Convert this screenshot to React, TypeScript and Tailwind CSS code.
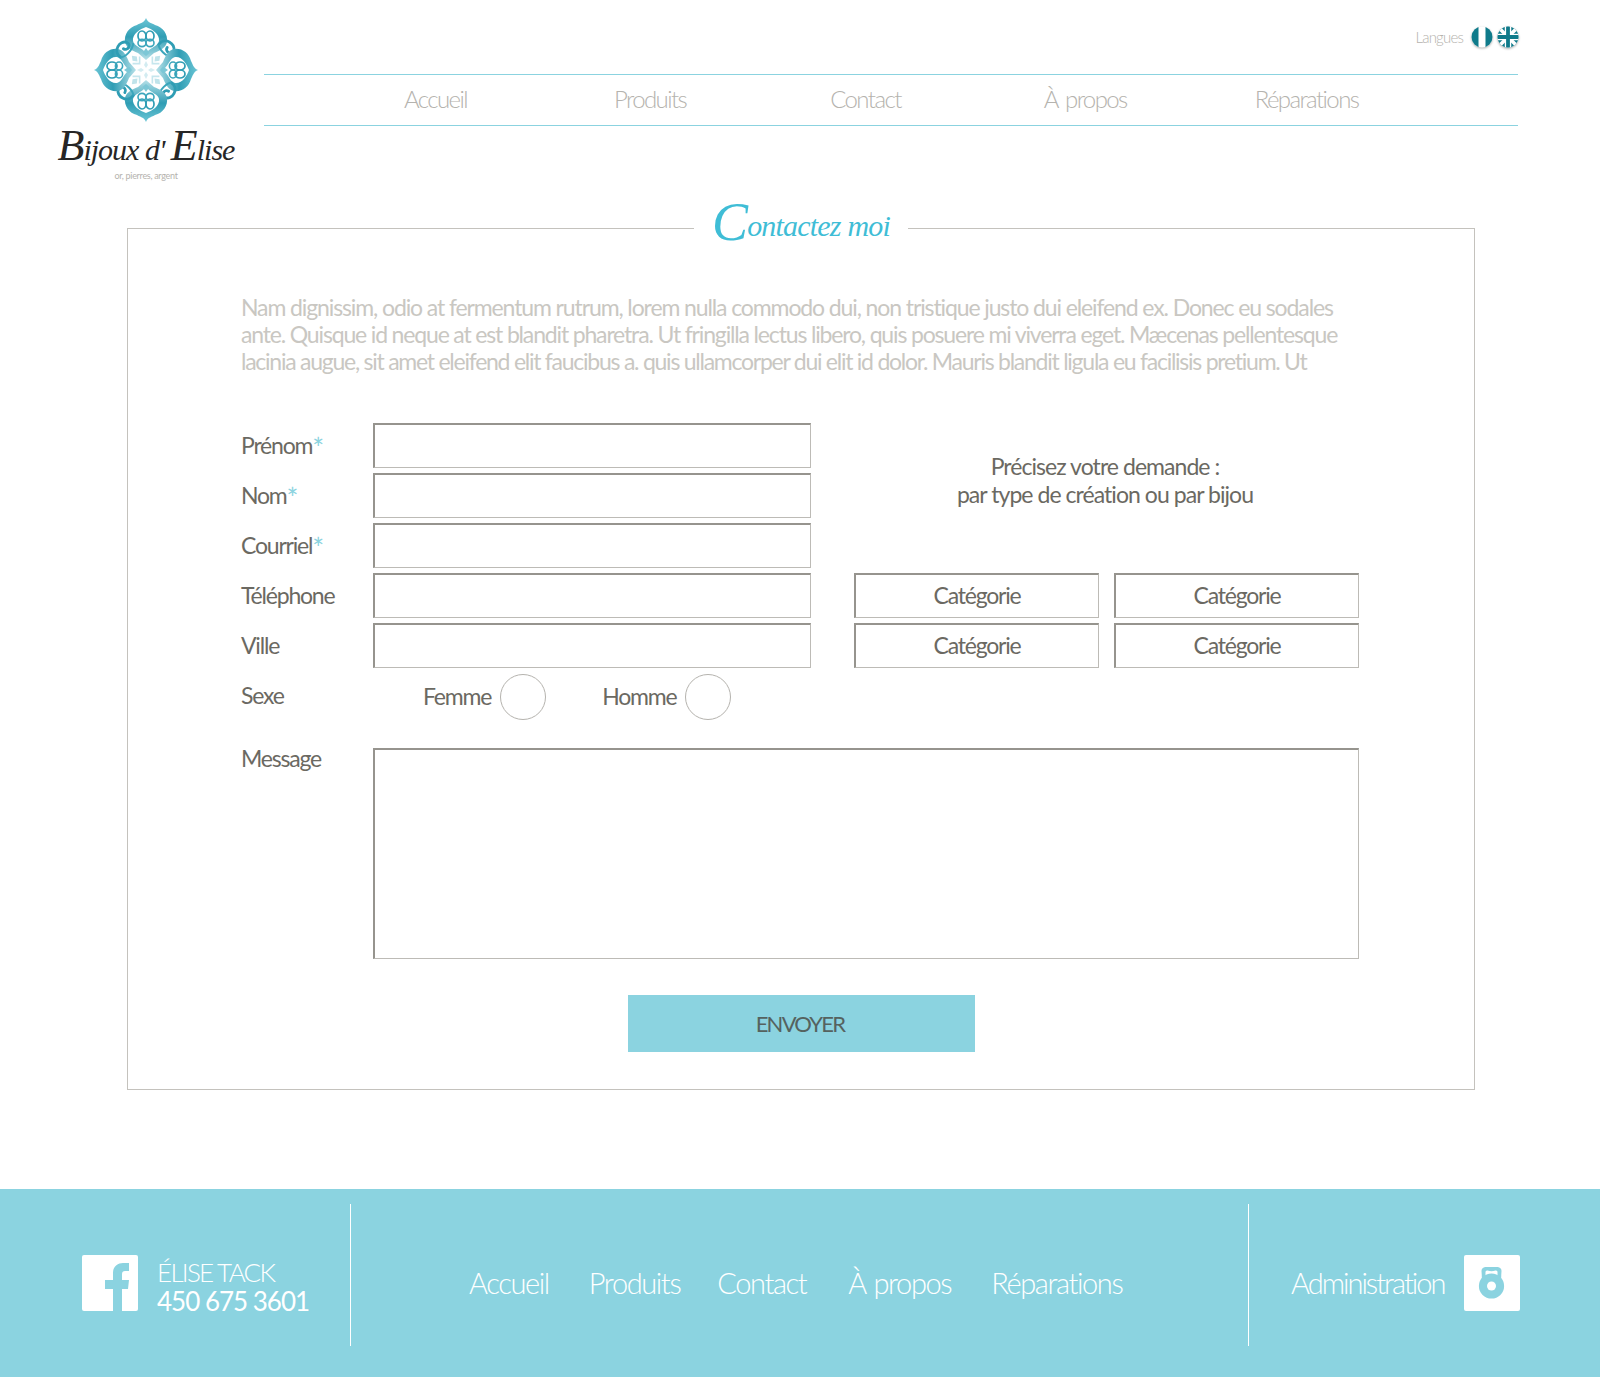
import React from "react";

const sans = "font-['Lato','Open_Sans',sans-serif]";

function Motif() {
  return (
    <g>
      <path d="M0 -52 C2 -47 6 -47 9 -45 C17 -43 22 -36 21 -28 C20 -22 13 -19 8 -17 L0 -10 L-8 -17 C-13 -19 -20 -22 -21 -28 C-22 -36 -17 -43 -9 -45 C-6 -47 -2 -47 0 -52 Z" fill="url(#lg)" />
      <path d="M0 -43 C6 -41 14 -36 13 -29 C12 -24 5 -23 0 -17 C-5 -23 -12 -24 -13 -29 C-14 -36 -6 -41 0 -43 Z" fill="#fff" />
      <ellipse cx="-4" cy="-34" rx="4" ry="5" fill="none" stroke="#2f9db4" strokeWidth="1.7" />
      <ellipse cx="4" cy="-34" rx="4" ry="5" fill="none" stroke="#2f9db4" strokeWidth="1.7" />
      <ellipse cx="-4" cy="-27" rx="4" ry="3.6" fill="none" stroke="#3ba6bc" strokeWidth="1.6" />
      <ellipse cx="4" cy="-27" rx="4" ry="3.6" fill="none" stroke="#3ba6bc" strokeWidth="1.6" />
      <path d="M0 -22 L3.5 -17 L0 -14 L-3.5 -17 Z" fill="#7cc7d6" />
      <g transform="rotate(45)">
        <path d="M-9 -27 C-11 -37 3 -40 6 -33 C8 -28 0 -26 -1 -31" fill="none" stroke="#2f9db4" strokeWidth="2.8" strokeLinecap="round" />
        <path d="M-9 -27 C-6 -24 4 -23 10 -28" fill="none" stroke="#3ba6bc" strokeWidth="2" />
        <path d="M0 -20 L3 -16 L0 -12 L-3 -16 Z" fill="#bfe3ea" />
        <path d="M-5 -14 L0 -9 L5 -14" fill="none" stroke="#c5e6ed" strokeWidth="1.6" />
      </g>
      <path d="M0 -9 L2 -5 L0 -2 L-2 -5 Z" fill="#d3ecf1" />
    </g>
  );
}

function Ornament() {
  return (
    <svg viewBox="-53 -53 106 106" className="w-[106px] h-[106px]">
      <defs>
        <linearGradient id="lg" x1="0" y1="-52" x2="0" y2="-10" gradientUnits="userSpaceOnUse">
          <stop offset="0" stopColor="#6cc6d6" />
          <stop offset="0.45" stopColor="#2f9db4" />
          <stop offset="1" stopColor="#b5e0e8" />
        </linearGradient>
      </defs>
      {[0, 90, 180, 270].map((r) => (
        <g key={r} transform={`rotate(${r})`}>
          <Motif />
        </g>
      ))}
    </svg>
  );
}

function Flag({ uk }: { uk?: boolean }) {
  return (
    <svg viewBox="0 0 22 22" className="w-[22px] h-[22px] drop-shadow-[0_1px_1px_rgba(0,0,0,0.3)]">
      <defs>
        <clipPath id={uk ? "cu" : "cf"}>
          <circle cx="11" cy="11" r="10.5" />
        </clipPath>
      </defs>
      <g clipPath={`url(#${uk ? "cu" : "cf"})`}>
        <rect width="22" height="22" fill="#fff" />
        {uk ? (
          <>
            <rect width="22" height="22" fill="#0f7a8a" />
            <path d="M0 0 L22 22 M22 0 L0 22" stroke="#fff" strokeWidth="3.5" />
            <path d="M11 0 V22 M0 11 H22" stroke="#fff" strokeWidth="6.5" />
            <path d="M11 0 V22 M0 11 H22" stroke="#0f7a8a" strokeWidth="3.8" />
          </>
        ) : (
          <>
            <rect width="7.5" height="22" fill="#0f7a8a" />
            <rect x="14.5" width="7.5" height="22" fill="#0f7a8a" />
          </>
        )}
      </g>
    </svg>
  );
}

const box = "border border-t-2 border-l-2 border-t-[#96948e] border-l-[#96948e] border-r-[#bdbbb6] border-b-[#bdbbb6] bg-white";
const rows = [
  { label: "Prénom", req: true },
  { label: "Nom", req: true },
  { label: "Courriel", req: true },
  { label: "Téléphone" },
  { label: "Ville" },
];

function Row({ label, req }: { label: string; req?: boolean }) {
  return (
    <div className="flex items-center h-[45px]">
      <span className="w-[132px] text-[23px] tracking-[-1.2px] text-[#6b6962]">
        {label}
        {req && <span className="text-[#8bd3e0] text-[28px] leading-[0] align-[-5px]">*</span>}
      </span>
      <div className={`w-[438px] h-[45px] ${box}`} />
    </div>
  );
}

function Cat() {
  return (
    <div className={`w-[245px] h-[45px] flex items-center justify-center pb-[2px] text-[23px] tracking-[-1.2px] text-[#6b6962] ${box}`}>
      Catégorie
    </div>
  );
}

function Radio({ label }: { label: string }) {
  return (
    <div className="flex items-center gap-[9px]">
      <span className="text-[23px] tracking-[-1.2px] text-[#6b6962]">{label}</span>
      <span className="block w-[46px] h-[46px] rounded-full border border-[#b5b3ae] bg-white" />
    </div>
  );
}

export default function App() {
  return (
    <div className={`w-[1600px] h-[1377px] bg-white flex flex-col ${sans}`}>
      <header className="flex h-[203px] shrink-0">
        <div className="w-[264px] shrink-0 flex flex-col items-center pl-[28px] pt-[17px]">
          <Ornament />
          <div className="font-['Liberation_Serif',serif] italic text-[30px] leading-[46px] tracking-[-1px] text-[#262626] mt-[0px] whitespace-nowrap">
            <span className="text-[44px]">B</span>ijoux d' <span className="text-[44px]">E</span>lise
          </div>
          <div className="text-[9px] leading-[10px] tracking-[-0.3px] text-[#b5b3ae] -mt-[2px] whitespace-nowrap">or, pierres, argent</div>
        </div>
        <div className="w-[1254px]">
          <div className="h-[74px] flex justify-end items-start pt-[26px] gap-[4px] -mr-[1px]">
            <span className="text-[15px] leading-[22px] font-light tracking-[-0.8px] text-[#b5b3ae] mr-[4px]">Langues</span>
            <Flag />
            <Flag uk />
          </div>
          <nav className="h-[52px] border-y border-[#8bd3e0] pl-[140px] pb-[2px] flex items-center text-[24px] font-light tracking-[-1.6px] text-[#b5b3ae]">
            <span>Accueil</span>
            <span className="ml-[147px]">Produits</span>
            <span className="ml-[144px]">Contact</span>
            <span className="ml-[143px] [word-spacing:3px]">À propos</span>
            <span className="ml-[128px]">Réparations</span>
          </nav>
        </div>
      </header>

      <fieldset className="ml-[127px] w-[1348px] h-[887px] border border-[#c4c2bd] shrink-0 px-[113px]">
        <legend className="mx-auto w-[214px] h-[50px] text-center font-['Liberation_Serif',serif] italic text-[30px] leading-[50px] tracking-[-0.8px] text-[#3fbdd6] whitespace-nowrap">
          <span className="relative -top-[6px]">
            <span className="text-[54px] leading-[50px] align-[-4px]">C</span>ontactez moi
          </span>
        </legend>
        <p className="mt-[41px] h-[81px] text-[23px] leading-[27px] font-normal tracking-[-1.16px] text-[#c9c7c2] whitespace-nowrap">
          <span className="tracking-[-1.11px]">Nam dignissim, odio at fermentum rutrum, lorem nulla commodo dui, non tristique justo dui eleifend ex. Donec eu sodales</span>
          <br />
          ante. Quisque id neque at est blandit pharetra. Ut fringilla lectus libero, quis posuere mi viverra eget. Mæcenas pellentesque
          <br />
          <span className="tracking-[-1.25px]">lacinia augue, sit amet eleifend elit faucibus a. quis ullamcorper dui elit id dolor. Mauris blandit ligula eu facilisis pretium. Ut</span>
        </p>
        <div className="mt-[48px] flex">
          <div className="flex flex-col gap-[5px] w-[570px]">
            {rows.map((r) => (
              <Row key={r.label} label={r.label} req={r.req} />
            ))}
            <div className="flex items-center h-[45px] mt-[1px]">
              <span className="w-[132px] pb-[2px] text-[23px] tracking-[-1.2px] text-[#6b6962]">Sexe</span>
              <div className="flex gap-[56px] pl-[50px]">
                <Radio label="Femme" />
                <Radio label="Homme" />
              </div>
            </div>
          </div>
          <div className="ml-[43px] w-[504px]">
            <p className="h-[150px] pt-[29px] pr-[2px] text-center text-[23px] leading-[28px] tracking-[-0.95px] text-[#6b6962]">
              Précisez votre demande :
              <br />
              par type de création ou par bijou
            </p>
            <div className="grid grid-cols-[245px_245px] gap-x-[15px] gap-y-[5px]">
              <Cat />
              <Cat />
              <Cat />
              <Cat />
            </div>
          </div>
        </div>
        <div className="mt-[29px] flex">
          <span className="w-[132px] text-[23px] leading-[20px] tracking-[-1.2px] text-[#6b6962]">Message</span>
          <div className={`w-[986px] h-[211px] ${box}`} />
        </div>
        <button className="mt-[36px] ml-[387px] block w-[347px] h-[57px] pr-[3px] bg-[#8bd3e0] text-[22px] tracking-[-1.75px] text-[#55625f]">
          ENVOYER
        </button>
      </fieldset>

      <footer className="mt-auto h-[188px] bg-[#8bd3e0] text-white flex pt-[15px]">
        <div className="w-[351px] h-[142px] border-r border-white flex items-center pl-[82px] pt-[16px] gap-[19px] shrink-0">
          <svg viewBox="0 0 56 56" className="w-[56px] h-[56px]">
            <rect width="56" height="56" rx="2" fill="#fff" />
            <path d="M31 56 V34 H23 V25 H31 V18 C31 11 36 8 41 8 H47 V16 H43 C41 16 40 17 40 19 V25 H47 L46 34 H40 V56 Z" fill="#8bd3e0" />
          </svg>
          <div className="text-[26px] leading-[29px] mt-[8px]">
            <div className="font-light tracking-[-1.7px]">ÉLISE TACK</div>
            <div className="font-normal tracking-[-1px]">450 675 3601</div>
          </div>
        </div>
        <nav className="w-[898px] h-[142px] border-r border-white flex items-center pl-[118px] pt-[16px] gap-[40px] text-[29px] font-light tracking-[-1.4px] shrink-0">
          <span>Accueil</span>
          <span>Produits</span>
          <span className="-ml-[3px]">Contact</span>
          <span className="ml-[2px] [word-spacing:2px]">À propos</span>
          <span>Réparations</span>
        </nav>
        <div className="h-[142px] flex items-center pl-[42px] pt-[16px] gap-[20px]">
          <span className="text-[29px] font-light tracking-[-2px]">Administration</span>
          <svg viewBox="0 0 56 56" className="w-[56px] h-[56px]">
            <rect width="56" height="56" rx="2" fill="#fff" />
            <path d="M18 25 L17.5 16 C17.5 13 20 12 22 12 H33 C35 12 37.5 13 37.5 16 L37 25 Z" fill="#8bd3e0" />
            <path d="M21.5 21 L21.5 17 C21.5 16 22.5 15.5 23.5 15.5 C26 16.5 29 16.5 31.5 15.5 C32.5 15.5 33.5 16 33.5 17 L33.5 21 Z" fill="#fff" />
            <circle cx="27.5" cy="31" r="12.6" fill="#8bd3e0" />
            <circle cx="27.5" cy="31" r="4.5" fill="#fff" />
          </svg>
        </div>
      </footer>
    </div>
  );
}
